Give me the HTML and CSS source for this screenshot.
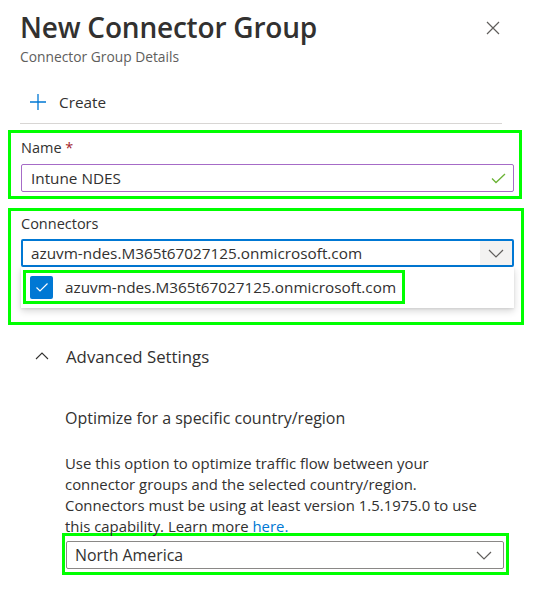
FILE: index.html
```html
<!DOCTYPE html>
<html lang="en">
<head>
<meta charset="utf-8">
<title>New Connector Group</title>
<link rel="stylesheet" href="styles.css">
</head>
<body>
<div class="panel">
  <header class="head">
    <div class="titles">
      <h1 class="title">New Connector Group</h1>
      <p class="subtitle">Connector Group Details</p>
    </div>
    <button class="close" aria-label="Close">
      <svg width="14" height="14" viewBox="0 0 14 14"><path d="M1 1L13 13M13 1L1 13" stroke="#605e5c" stroke-width="1.2" fill="none"/></svg>
    </button>
  </header>

  <div class="toolbar">
    <span class="tb-btn">
      <svg class="plus" width="16" height="16" viewBox="0 0 16 16"><path d="M8 0V16M0 8H16" stroke="#0078d4" stroke-width="1.3" fill="none"/></svg>
      <span>Create</span>
    </span>
  </div>

  <div class="annot box-name">
    <div class="label">Name <span class="req">*</span></div>
    <div class="field field-valid">
      <span class="field-text">Intune NDES</span>
      <svg class="valid" width="15" height="11" viewBox="0 0 15 11"><path d="M1 5.5L5 9.5L14 1" stroke="#6bb335" stroke-width="1.3" fill="none"/></svg>
    </div>
  </div>

  <div class="annot box-conn">
    <div class="label">Connectors</div>
    <div class="field field-focus">
      <span class="field-text">azuvm-ndes.M365t67027125.onmicrosoft.com</span>
      <span class="chev-cell">
        <svg width="16" height="9" viewBox="0 0 16 9"><path d="M1 1L8 8L15 1" stroke="#605e5c" stroke-width="1.2" fill="none"/></svg>
      </span>
    </div>
    <div class="dropdown">
      <div class="annot option">
        <span class="checkbox">
          <svg width="14" height="11" viewBox="0 0 14 11"><path d="M1.5 5.5L5 9L12.5 1.5" stroke="#ffffff" stroke-width="1.2" fill="none"/></svg>
        </span>
        <span class="option-text">azuvm-ndes.M365t67027125.onmicrosoft.com</span>
      </div>
    </div>
  </div>

  <div class="advanced">
    <svg class="chev-up" width="14" height="8" viewBox="0 0 14 8"><path d="M1 7L7 1L13 7" stroke="#323130" stroke-width="1.1" fill="none"/></svg>
    <span>Advanced Settings</span>
  </div>

  <section class="region">
    <h2 class="region-title">Optimize for a specific country/region</h2>
    <p class="region-desc">Use this option to optimize traffic flow between your<br>connector groups and the selected country/region.<br>Connectors must be using at least version 1.5.1975.0 to use<br>this capability. Learn more <a class="link" href="#">here.</a></p>
    <div class="annot box-region">
      <div class="field field-plain">
        <span class="field-text">North America</span>
        <svg class="chev" width="16" height="9" viewBox="0 0 16 9"><path d="M1 1L8 8L15 1" stroke="#605e5c" stroke-width="1.2" fill="none"/></svg>
      </div>
    </div>
  </section>
</div>
</body>
</html>
```

FILE: styles.css
```css
* { box-sizing: border-box; }
html, body { margin: 0; padding: 0; background: #ffffff; }
body {
  font-family: "Open Sans", "Noto Sans", sans-serif;
  color: #323130;
  width: 536px;
  height: 592px;
  overflow: hidden;
}
.panel { display: flex; flex-direction: column; }

.head {
  display: flex;
  justify-content: space-between;
  align-items: flex-start;
  padding: 9px 0 0 20px;
}
.title {
  margin: 0;
  font-size: 28px;
  line-height: 36px;
  font-weight: 600;
  color: #323130;
  letter-spacing: -0.2px;
}
.subtitle {
  margin: 3px 0 0;
  font-size: 13.8px;
  line-height: 18px;
  color: #605e5c;
}
.close {
  border: 0;
  background: none;
  padding: 0;
  margin: 12px 36px 0 0;
  width: 14px;
  height: 14px;
  display: flex;
}

.toolbar {
  margin: 20px 34px 0 20px;
  padding: 0 0 5px 10px;
  border-bottom: 1px solid #d8d6d4;
  height: 38px;
  display: flex;
  align-items: center;
}
.tb-btn {
  display: flex;
  align-items: center;
  gap: 13px;
  font-size: 15.3px;
  line-height: 32px;
  color: #323130;
}

.annot { border: 3px solid #00ff00; }

.label {
  font-size: 14.5px;
  line-height: 20px;
  color: #323130;
}
.req { color: #a4262c; }

.field {
  height: 28px;
  display: flex;
  align-items: center;
  font-size: 15.3px;
  color: #323130;
  border-radius: 2px;
  background: #fff;
}
.field-text { flex: 1; white-space: nowrap; }

.box-name {
  margin: 6px 14px 0 8px;
  padding: 5px 5px 4px 10px;
}
.box-name .label { margin-bottom: 6px; }
.field-valid {
  border: 1px solid #a66bc7;
  padding: 0 7px 0 9px;
}

.box-conn {
  margin: 9px 12px 0 8px;
  padding: 3px 7px 14px 10px;
}
.box-conn .label { margin-bottom: 5px; }
.field-focus {
  border: 2px solid #0078d4;
  padding: 0 0 0 8px;
}
.chev-cell {
  width: 32px;
  height: 24px;
  background: #f3f2f1;
  display: flex;
  align-items: center;
  justify-content: center;
}
.dropdown {
  height: 41px;
  background: #fff;
  box-shadow: 0 3px 7px rgba(0,0,0,0.16), 0 1px 2px rgba(0,0,0,0.08);
  padding: 3px 0 0 2px;
}
.option {
  width: 382px;
  height: 34px;
  display: flex;
  align-items: center;
  padding-left: 4px;
  gap: 12px;
  font-size: 15.3px;
}
.checkbox {
  width: 23px;
  height: 23px;
  flex: none;
  background: #0078d4;
  border-radius: 2px;
  display: flex;
  align-items: center;
  justify-content: center;
}
.option-text { white-space: nowrap; }

.advanced {
  margin-top: 15px;
  height: 32px;
  display: flex;
  align-items: center;
  padding-left: 35px;
  gap: 17px;
  font-size: 16.8px;
  color: #323130;
}

.region { padding-left: 65px; }
.region-title {
  margin: 34px 0 0;
  font-size: 16px;
  line-height: 24px;
  font-weight: 400;
  color: #323130;
}
.region-desc {
  margin: 23px 0 0;
  font-size: 14.9px;
  line-height: 21px;
  color: #323130;
}
.link { color: #0078d4; text-decoration: none; }

.box-region {
  margin: -4px 27px 0 -3px;
  padding: 5px 2px 3px 1px;
}
.field-plain {
  border: 1px solid #8a8886;
  padding: 0 11px 0 8px;
  font-size: 15.9px;
}
```
